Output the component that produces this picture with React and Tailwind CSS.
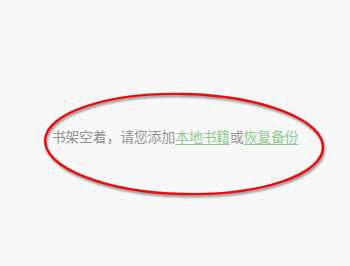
export default function App() {
  return (
    <div className="relative w-[350px] h-[266px] bg-[#f7f7f7] overflow-hidden" style={{ fontFamily: '"Noto Sans CJK SC", sans-serif' }}>
      <div className="flex justify-center pt-[126px]">
        <p className="text-[14px] leading-[20px] text-[#939393] tracking-[-0.3px]">
          书架空着，请您添加
          <span className="text-[#8fcb8f] underline underline-offset-[2px]">本地书籍</span>
          或
          <span className="text-[#8fcb8f] underline underline-offset-[2px]">恢复备份</span>
        </p>
      </div>
      <svg
        className="absolute left-0 top-0 pointer-events-none drop-shadow-[1px_2px_1px_rgba(0,0,0,0.45)]"
        width="350"
        height="266"
        viewBox="0 0 350 266"
      >
        <ellipse cx="184" cy="144" rx="139" ry="50" fill="none" stroke="#ee0a0a" strokeWidth="2.4" transform="rotate(1.5 184 144)" />
      </svg>
    </div>
  )
}
